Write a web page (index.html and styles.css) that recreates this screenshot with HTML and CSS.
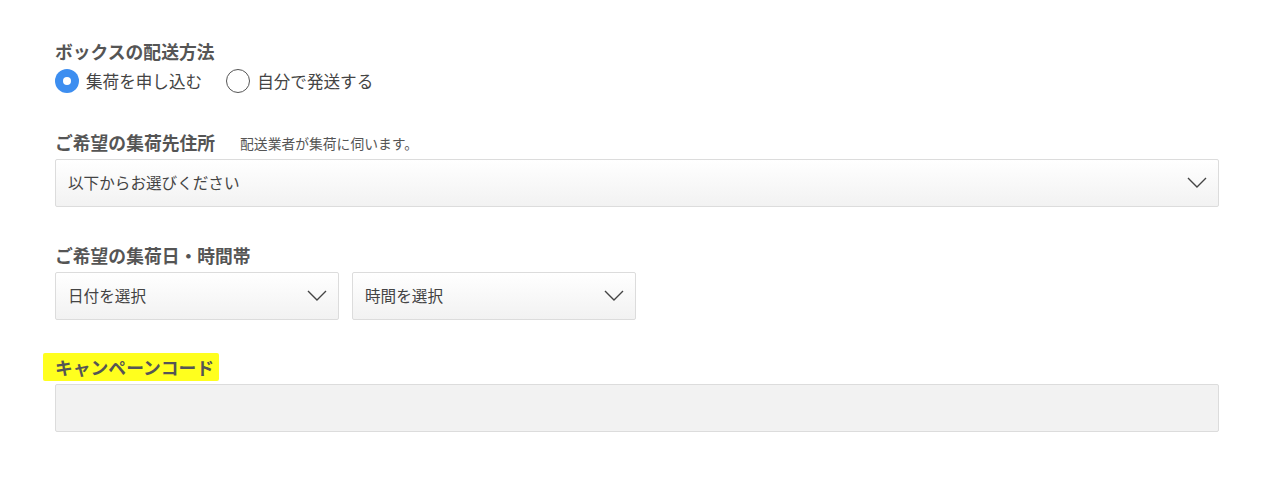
FILE: index.html
```html
<!DOCTYPE html>
<html lang="ja">
<head>
<meta charset="utf-8">
<title>集荷フォーム</title>
<link rel="stylesheet" href="styles.css">
</head>
<body>
<form class="form">
  <section class="field field-first">
    <h2 class="label">ボックスの配送方法</h2>
    <div class="radios">
      <label class="radio">
        <span class="radio-mark checked"></span>
        <span class="radio-text">集荷を申し込む</span>
      </label>
      <label class="radio">
        <span class="radio-mark"></span>
        <span class="radio-text">自分で発送する</span>
      </label>
    </div>
  </section>

  <section class="field">
    <h2 class="label">ご希望の集荷先住所<span class="note">配送業者が集荷に伺います。</span></h2>
    <div class="select select-full">
      <span class="select-text">以下からお選びください</span>
      <svg class="chevron" viewBox="0 0 20 11" width="20" height="11"><path d="M1 1 L10 10 L19 1" fill="none" stroke="#444" stroke-width="1.4"/></svg>
    </div>
  </section>

  <section class="field">
    <h2 class="label">ご希望の集荷日・時間帯</h2>
    <div class="select-row">
      <div class="select select-half">
        <span class="select-text">日付を選択</span>
        <svg class="chevron" viewBox="0 0 20 11" width="20" height="11"><path d="M1 1 L10 10 L19 1" fill="none" stroke="#444" stroke-width="1.4"/></svg>
      </div>
      <div class="select select-half">
        <span class="select-text">時間を選択</span>
        <svg class="chevron" viewBox="0 0 20 11" width="20" height="11"><path d="M1 1 L10 10 L19 1" fill="none" stroke="#444" stroke-width="1.4"/></svg>
      </div>
    </div>
  </section>

  <section class="field field-last">
    <h2 class="label"><span class="highlight">キャンペーンコード</span></h2>
    <div class="input"></div>
  </section>
</form>
</body>
</html>
```

FILE: styles.css
```css
* { box-sizing: border-box; }
html, body { margin: 0; padding: 0; background: #fff; }
body {
  font-family: "Noto Sans CJK JP", "Noto Sans", sans-serif;
  color: #333;
}
.form {
  padding: 38px 54px 0 55px;
  width: 1273px;
}
.field { margin-top: 35px; }
.field-first { margin-top: 0; }
.field-last { margin-top: 34px; }
.label {
  margin: 0 0 4px;
  font-size: 17.8px;
  line-height: 26px;
  height: 26px;
  font-weight: 700;
  color: #555;
  white-space: nowrap;
}
.note {
  font-size: 13.8px;
  font-weight: 400;
  color: #555;
  margin-left: 25px;
  vertical-align: 1px;
}
.radios {
  display: flex;
  gap: 24px;
  height: 26px;
  align-items: center;
}
.radio {
  display: flex;
  align-items: center;
  gap: 7px;
  font-size: 16.6px;
  color: #444;
}
.radio-mark {
  width: 24px;
  height: 24px;
  border-radius: 50%;
  border: 1px solid #555;
  background: #fff;
  display: inline-block;
  position: relative;
}
.radio-mark.checked {
  border: none;
  background: #3d8ef0;
}
.radio-mark.checked::after {
  content: "";
  position: absolute;
  left: 8px;
  top: 8px;
  width: 8px;
  height: 8px;
  border-radius: 50%;
  background: #fff;
}
.select {
  height: 48px;
  border: 1px solid #dcdcdc;
  border-radius: 2px;
  background: linear-gradient(#ffffff, #f2f2f2);
  display: flex;
  align-items: center;
  justify-content: space-between;
  padding: 0 11px 2px 12px;
}
.select-full { width: 1164px; }
.select-row { display: flex; gap: 13px; }
.select-half { width: 284px; }
.select-text {
  font-size: 15.6px;
  color: #444;
}
.chevron { display: block; }
.highlight {
  background: #ffff1e;
  margin-left: -12px;
  padding: 1px 5px 1px 12px;
  border-radius: 2px;
}
.input {
  height: 48px;
  width: 1164px;
  border: 1px solid #dcdcdc;
  border-radius: 2px;
  background: #f2f2f2;
}
```
